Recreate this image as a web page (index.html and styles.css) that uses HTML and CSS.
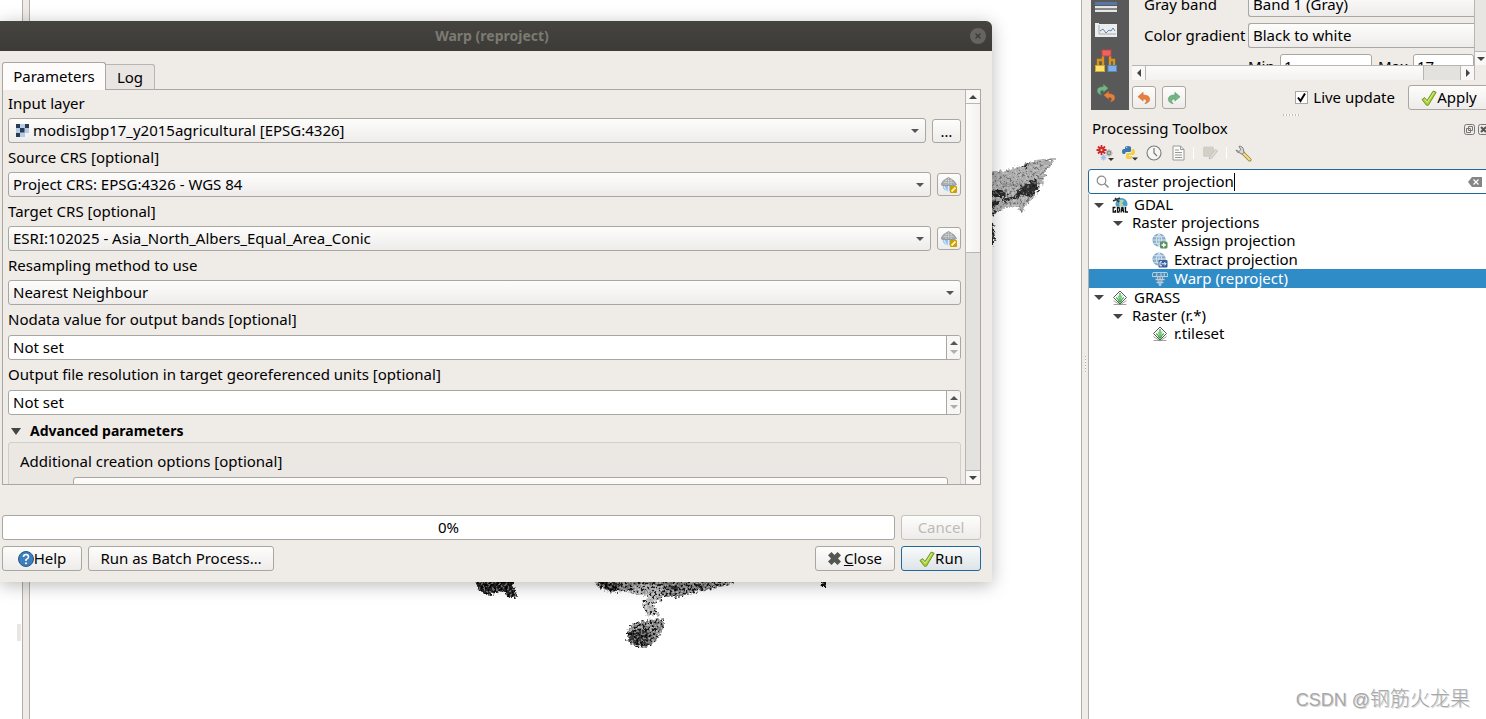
FILE: index.html
```html
<!DOCTYPE html>
<html lang="en">
<head>
<meta charset="utf-8">
<title>Warp (reproject)</title>
<link rel="stylesheet" href="styles.css">
</head>
<body>
<svg class="defs" aria-hidden="true">
  <defs>
    <filter id="grain" x="0" y="0" width="1" height="1" color-interpolation-filters="sRGB">
      <feTurbulence type="fractalNoise" baseFrequency="0.45" numOctaves="2" seed="4" result="n"/>
      <feColorMatrix in="n" values="3 0 0 0 -1  3 0 0 0 -1  3 0 0 0 -1  0 0 0 0 1"/>
      <feComponentTransfer result="g">
        <feFuncR type="discrete" tableValues="0.1 0.4 0.5 0.52 0.68"/>
        <feFuncG type="discrete" tableValues="0.1 0.4 0.5 0.52 0.68"/>
        <feFuncB type="discrete" tableValues="0.1 0.4 0.5 0.52 0.68"/>
      </feComponentTransfer>
      <feBlend in="g" in2="SourceGraphic" mode="hard-light" result="b"/>
      <feComposite in="b" in2="SourceGraphic" operator="in"/>
    </filter>
    <filter id="fine-grain" x="0" y="0" width="1" height="1" color-interpolation-filters="sRGB">
      <feTurbulence type="fractalNoise" baseFrequency="0.4" numOctaves="2" seed="7" result="n"/>
      <feColorMatrix in="n" values="3 0 0 0 -1  3 0 0 0 -1  3 0 0 0 -1  0 0 0 0 1"/>
      <feComponentTransfer result="g">
        <feFuncR type="discrete" tableValues="0.35 0.5 0.5 0.5 0.5 0.62"/>
        <feFuncG type="discrete" tableValues="0.35 0.5 0.5 0.5 0.5 0.62"/>
        <feFuncB type="discrete" tableValues="0.35 0.5 0.5 0.5 0.5 0.62"/>
      </feComponentTransfer>
      <feBlend in="g" in2="SourceGraphic" mode="hard-light" result="b"/>
      <feComposite in="b" in2="SourceGraphic" operator="in"/>
    </filter>
    <filter id="rough" x="-0.1" y="-0.1" width="1.2" height="1.2" color-interpolation-filters="sRGB">
      <feTurbulence type="fractalNoise" baseFrequency="0.4" numOctaves="2" seed="9" result="n"/>
      <feDisplacementMap in="SourceGraphic" in2="n" scale="7" xChannelSelector="R" yChannelSelector="G"/>
    </filter>
    <symbol id="check" viewBox="0 0 16 16"><path d="M1 9.5 3.6 7.6 6 10.6 12.2 1 15.2 2.2 7.4 15.2 5.4 15.2z" fill="#a9cf38" stroke="#6d8f1c" stroke-width=".9" stroke-linejoin="round"/><path d="M3.4 9 6.3 12.4 13 2.2" fill="none" stroke="#dcef8c" stroke-width="1"/></symbol>
    <symbol id="crs" viewBox="0 0 16 16"><circle cx="7.500" cy="8.500" r="6" fill="#9cc6ee"/><path d="M3 9q1 4 4 5.500M7.500 9v6" stroke="#dcebf8" fill="none"/><path d="M0 7.500Q2 3 5 2L7.500.5 10 2q3 1 5.500 5.500-2 2-4 .7-2 1.500-4 0-2 1.500-4 0-2 1-3.500-.7z" fill="#a9abad" stroke="#85888a" stroke-width=".7"/><path d="M2.500 5.500h10M4.500 3.500h6M4.800 2.500v5.500M7.500 1v7M10.200 2.500v5.500" stroke="#dcdcdc" stroke-width=".7" stroke-dasharray="1.500 .7"/><rect x="9" y="9" width="7" height="7" rx="1" fill="#c8a000"/><path d="M10.500 14.500 14.500 10.500" stroke="#fff3b0" stroke-width="1.800"/></symbol>
    <symbol id="globe" viewBox="0 0 16 16"><circle cx="7.500" cy="7.500" r="7" fill="#86acca"/><path d="M.8 7.500h13.400M2 4h11M2 11h11M7.500.5v14M7.500.8q-6 6.700 0 13.400M7.500.8q6 6.700 0 13.400" stroke="#e1edf6" stroke-width=".9" fill="none"/></symbol>
    <symbol id="grass" viewBox="0 0 16 16"><path d="M8 1 14.500 7.500 8 14 1.500 7.500z" fill="#fff" stroke="#555"/><path d="M1.500 10.500 8 15l6.500-4.500M1.500 14.500h13" stroke="#888" stroke-width=".8" fill="none"/><path d="M8 12.500V3M7.500 12.500Q6.500 9 4.200 7.500M8.500 12.500Q9.500 9 11.800 7.500" stroke="#2fa53a" stroke-width="1.200" fill="none"/><path d="M7.700 11Q7 8 6 5.500M8.300 11Q9 8 10.200 5" stroke="#6cc273" stroke-width=".9" fill="none"/></symbol>
    <symbol id="undo" viewBox="0 0 16 16"><path d="M1 6.500 7 1.500V4.500Q14.500 4.500 14.500 9.500 14.500 13.500 9 14.500 11.500 12 10.500 10.300 9.700 9 7 9V11.500z" fill="#e8803c" stroke="#c9682b" stroke-width=".6"/></symbol>
    <symbol id="redo" viewBox="0 0 16 16"><path d="M15 6.500 9 1.500V4.500Q1.500 4.500 1.500 9.500 1.500 13.500 7 14.500 4.500 12 5.500 10.300 6.300 9 9 9V11.500z" fill="#74b583" stroke="#4e9560" stroke-width=".6"/></symbol>
  </defs>
</svg>

<div class="desktop">
  <aside class="left-dock"><span class="dock-mark"></span></aside>
  <div class="splitter"></div>

  <main class="canvas">
    <svg class="map" width="1051" height="719" aria-label="Raster map">
      <g filter="url(#fine-grain)">
        <g filter="url(#rough)">
          <path d="M930 169 962 170 974 171 990 166 1006 160 1018 159 1024 161 1016 171 1013 182 1005 196 995 207 992 214 986 206 974 209 962 214 930 224z" fill="#acacac"/>
          <path d="M1005 179 1009 189 1002 197 994 195 978 201 970 203 972 199 984 196 992 186z" fill="#303030"/>
          <path d="M955 190 968 190 978 193 974 197 955 197zM955 208 966 207 970 200 960 201 955 203zM955 213 968 211 962 216 955 216zM955 220 963 222 965 238 962 248 955 240z" fill="#2c2c2c"/>
          <path d="M989 167 999 163 997 167z" fill="#333"/>
          <path d="M972 184 992 182 990 186 974 187z" fill="#929292"/>
        </g>
      </g>
      <g filter="url(#grain)">
        <g filter="url(#rough)">
          <path d="M442 570H484V586L487 598 479 598 474 591 458 595 448 590z" fill="#262626"/>
          <path d="M564 570H706L702 584 686 588 666 592 650 597 630 597 616 594 598 592 578 590 565 586z" fill="#888"/>
          <path d="M568 582 590 582 588 592 576 591zM638 586H650L646 592zM664 584H674L668 590z" fill="#303030"/>
          <path d="M604 585H632V600L622 603 630 615 617 616 612 604 620 596 604 594z" fill="#b8b8b8"/>
          <path d="M604 624 616 620 634 619 634 628 628 638 618 648 606 647 597 641 597 630z" fill="#858585"/>
          <path d="M598 632 608 629 622 634 616 645 606 645 598 639z" fill="#383838"/>
          <path d="M790 575H796V588H792z" fill="#111"/>
        </g>
      </g>
      <path d="M1016 161 1020 159 1026 159" stroke="#777" fill="none"/>
    </svg>
  </main>

  <div class="splitter grip"></div>

  <aside class="right-dock">
    <section class="styling">
      <nav class="style-tabs">
        <svg width="22" height="16" viewBox="0 0 22 16"><path d="M0 5h22v3H0z" fill="#5577a8"/><path d="M0 9h22v2H0zM0 13h22v2H0z" fill="#e6e6e6"/><path d="M0 11h22v2H0z" fill="#888"/></svg>
        <svg width="22" height="16" viewBox="0 0 22 16"><path d="M0 0h4v14H0zM3 1h19v13H3z" fill="#eceeee"/><path d="M4 2v9h17" stroke="#a8abae" fill="none"/><path d="M5 8 8 6 11 10 14 7 16 8 18 5 20 8" stroke="#6488ad" fill="none"/></svg>
        <svg width="22" height="24" viewBox="0 0 22 24"><path d="M3 18V11h5V7M19 18V11h-4V7M8 11v6M15 11v6" fill="none" stroke="#d89220" stroke-width="2.400"/><rect x="7" y="1" width="9" height="6" fill="#e96464" stroke="#c94343"/><rect x=".5" y="16.500" width="9" height="6" fill="#ffe26b" stroke="#d3a72b"/><rect x="13" y="16.500" width="8.500" height="6" fill="#7fb0e6" stroke="#5687bd"/></svg>
        <svg width="22" height="22" viewBox="0 0 22 22"><use href="#redo" x="1" y="0" width="13" height="13"/><use href="#undo" x="8" y="7" width="13" height="13"/></svg>
      </nav>
      <div class="style-main">
        <div class="style-view">
          <div class="style-form">
            <label for="band">Gray band</label>
            <span class="combo flush"><select id="band"><option>Band 1 (Gray)</option></select></span>
            <label for="grad">Color gradient</label>
            <span class="combo flush"><select id="grad"><option>Black to white</option></select></span>
            <div class="minmax">
              <label for="min">Min</label><input id="min" type="text" value="1">
              <label for="max">Max</label><input id="max" type="text" value="17">
            </div>
          </div>
          <div class="vbar small"><i></i><button type="button" class="down" aria-label="Scroll down"></button></div>
        </div>
        <div class="hbar"><button type="button" class="left" aria-label="Scroll left"></button><i class="thumb"></i><i class="track"></i><button type="button" class="right" aria-label="Scroll right"></button></div>
        <div class="style-actions">
          <button type="button" class="btn tool" aria-label="Undo"><svg width="14" height="14"><use href="#undo"/></svg></button>
          <button type="button" class="btn tool" aria-label="Redo"><svg width="14" height="14"><use href="#redo"/></svg></button>
          <label class="live"><input type="checkbox" checked><span>Live update</span></label>
          <button type="button" class="btn apply"><svg width="16" height="16"><use href="#check"/></svg><span>Apply</span></button>
        </div>
      </div>
    </section>
    <div class="dots"></div>

    <section class="toolbox">
      <header class="toolbox-head">
        <h2>Processing Toolbox</h2>
        <button type="button" class="mini" aria-label="Float"><svg width="11" height="11" viewBox="0 0 11 11"><rect x=".5" y=".5" width="10" height="10" rx="2" fill="none" stroke="#777"/><path d="M4.500 2.500h4v4h-4zM2.500 4.500h4v4h-4z" fill="#efebe7" stroke="#777"/></svg></button>
        <button type="button" class="mini" aria-label="Close panel"><svg width="11" height="11" viewBox="0 0 11 11"><rect x=".5" y=".5" width="10" height="10" rx="2" fill="none" stroke="#777"/><path d="M3 3l5 5M8 3l-5 5" stroke="#555" stroke-width="2"/></svg></button>
      </header>
      <div class="toolbar">
        <button type="button" aria-label="Models"><svg width="18" height="16" viewBox="0 0 18 16"><circle cx="5.500" cy="5" r="3" fill="#cf2a2a"/><path d="M5.500 0v10M.5 5h10M2 1.500l7 7M9 1.500l-7 7" stroke="#cf2a2a" stroke-width="1.800"/><circle cx="5.500" cy="5" r="1" fill="#f5dede"/><circle cx="13" cy="8" r="2" fill="#8c8c8c"/><path d="M13 4.500v7M9.500 8h7M10.600 5.600l4.800 4.800M15.400 5.600l-4.800 4.800" stroke="#8c8c8c" stroke-width="1.200"/><circle cx="13" cy="8" r=".8" fill="#eee"/><circle cx="7.500" cy="12.500" r="2" fill="#a5bfea"/><path d="M7.500 9.500v6M4.500 12.500h6M5.400 10.400l4.200 4.200M9.600 10.400l-4.200 4.200" stroke="#a5bfea" stroke-width="1.100"/><path d="M12 13h6l-3 3z" fill="#333"/></svg></button>
        <button type="button" aria-label="Scripts"><svg width="18" height="16" viewBox="0 0 18 16"><path d="M4 4V2.500Q4 1 7 1T10 2.500V5.500Q10 7 8.500 7H5.500Q4 7 4 9H2.500Q1 9 1 6.500T2.500 4H7z" fill="#3b78ae"/><path d="M10.500 4H12Q14 4 14 7T12 10H8V11H11V12.500Q11 14 8 14T5 12.500V9.500Q5 8 6.500 8H9.500Q10.500 8 10.500 6.500z" fill="#f6cf46"/><circle cx="5.700" cy="2.500" r=".6" fill="#fff"/><path d="M11 12.500h6l-3 3z" fill="#333"/></svg></button>
        <button type="button" aria-label="History"><svg width="16" height="16" viewBox="0 0 16 16"><circle cx="8" cy="8" r="7" fill="#f6f6f4" stroke="#7b7b7b" stroke-width="1.100"/><path d="M8 3v5l3 3" fill="none" stroke="#777" stroke-width="1.200"/></svg></button>
        <button type="button" aria-label="Results"><svg width="16" height="16" viewBox="-3 0 16 16"><path d="M1 1h7.500l3.500 3.500V15H1z" fill="#fafaf8" stroke="#9a9a9a"/><path d="M8.500 1v3.500H12M3 5h4M3 7.500h7M3 10h7M3 12.500h7" fill="none" stroke="#999"/></svg></button>
        <i class="sep"></i>
        <button type="button" aria-label="Edit in place" disabled><svg width="16" height="16" viewBox="0 0 16 16"><path d="M1 3 2 1.500h9l1 1.500v7l-3 2H2l-1-1z" fill="#d2cfc7"/><path d="M7 14 8 11 13.500 4.500l2 1.500L10 13z" fill="#dedbd2" stroke="#bebab1" stroke-width=".8"/></svg></button>
        <i class="sep"></i>
        <button type="button" aria-label="Options"><svg width="17" height="17" viewBox="0 0 17 17"><path d="M7.500 7.500 14.700 14.700" stroke="#8f7a35" stroke-width="3.600" stroke-linecap="round"/><path d="M8.500 8.500 14.700 14.600" stroke="#efdc84" stroke-width="2.200" stroke-linecap="round"/><path d="M4 1.200Q8 1 8.500 5L9 7.500 7 9.200 5 8Q2 8 1 5L4 6.500 5.800 4.800z" fill="#d9dad8" stroke="#777" stroke-width=".9"/></svg></button>
      </div>
      <div class="search">
        <svg width="14" height="14" viewBox="0 0 14 14"><circle cx="5.500" cy="5.500" r="4.300" fill="none" stroke="#8c8c8c" stroke-width="1.200"/><path d="M8.700 8.700 12.500 12.500" stroke="#8c8c8c" stroke-width="1.600"/></svg>
        <label class="field"><span class="search-size">raster projection</span><input type="text" value="raster projection" aria-label="Search"></label>
        <button type="button" class="clear" aria-label="Clear"><svg width="14" height="10" viewBox="0 0 14 10"><path d="M4 0h10v10H4L0 5z" fill="#858585"/><path d="M5.500 2.500l5 5M10.500 2.500l-5 5" stroke="#fff" stroke-width="1.200"/></svg></button>
      </div>
      <ul class="tree">
        <li class="lvl1"><i class="arrow"></i><svg width="16" height="16" viewBox="0 0 16 16"><circle cx="9.500" cy="7" r="6" fill="#4c9fc9"/><path d="M8 3q3-1 4 1l-2 2 2 3-2 2-3-3z" fill="#b5d4a2"/><path d="M1 4 8 1M3 1l4 4" stroke="#333" stroke-width="1.500"/><path d="M0 9h16v7H0z" fill="#fff" fill-opacity=".6"/><path d="M3.500 10.500H1.200v4.500h2.200v-2M5.500 10.500V15H7q1.200-2 0-4.500zM9 15.500l1-5h.8l1 5M9.500 13.500h2M13.500 10v5H16" stroke="#111" stroke-width="1.300" fill="none"/></svg><span>GDAL</span></li>
        <li class="lvl2"><i class="arrow"></i><span>Raster projections</span></li>
        <li class="lvl3"><svg width="16" height="16" viewBox="0 0 16 16"><use href="#globe" width="15" height="15"/><rect x="8" y="8.500" width="7.500" height="7" rx="1.500" fill="#5a8f60"/><path d="M11.700 9.800v4.500M9.500 12H14" stroke="#fff" stroke-width="1.400"/></svg><span>Assign projection</span></li>
        <li class="lvl3 tall"><svg width="16" height="16" viewBox="0 0 16 16"><use href="#globe" width="15" height="15"/><rect x="6.500" y="8" width="9" height="7.500" rx="1" fill="#3a5e9c"/><path d="M10 9.800H8v4h2M9.500 11.800H14M12.300 10l1.700 1.800-1.700 1.700" stroke="#fff" fill="none"/></svg><span>Extract projection</span></li>
        <li class="lvl3 tall selected"><svg width="16" height="16" viewBox="0 0 16 16"><path d="M3 3h10q1 8-5 12-6-4-5-12z" fill="#5d8fb4"/><path d="M1 1.500h14M0 5.500h16M1 1.500 0 5.500M5 1.500 4.500 5.500M9 1.500v4M12 1.500l.5 4M15 1.500l1 4M3.500 8.500h9M4.500 11.500h7M5.500 6Q6 12 8 15M10.500 6Q10 12 8 15M8 6v9" stroke="#b7cfdf" fill="none"/></svg><span>Warp (reproject)</span></li>
        <li class="lvl1 tall"><i class="arrow"></i><svg width="16" height="16"><use href="#grass"/></svg><span>GRASS</span></li>
        <li class="lvl2"><i class="arrow"></i><span>Raster (r.*)</span></li>
        <li class="lvl3"><svg width="16" height="16"><use href="#grass"/></svg><span>r.tileset</span></li>
      </ul>
    </section>
  </aside>

  <section class="dialog" role="dialog" aria-labelledby="dlg-title">
    <header class="titlebar">
      <h1 id="dlg-title">Warp (reproject)</h1>
      <button type="button" class="win-close" aria-label="Close window"><svg width="16" height="16" viewBox="0 0 16 16"><circle cx="8" cy="8" r="8" fill="#656460"/><path d="M5.500 5.500l5 5M10.500 5.500l-5 5" stroke="#3a3935" stroke-width="1.200"/></svg></button>
    </header>
    <div class="dialog-body">
      <div class="tabs"><button type="button" class="tab active">Parameters</button><button type="button" class="tab">Log</button></div>
      <div class="pane">
        <form class="params">
          <label for="layer">Input layer</label>
          <div class="row">
            <span class="combo with-icon"><svg width="13" height="13" viewBox="0 0 13 13"><path d="M0 0h13v13H0z" fill="#b5cbe6"/><path d="M0 0h4v4H0zM9 0h4v4H9zM4 4h4.500v4.500H4zM0 9h4v4H0z" fill="#2c3c50"/><path d="M9 9h4v4H9z" fill="#eef3f8"/></svg><select id="layer"><option>modisIgbp17_y2015agricultural [EPSG:4326]</option></select></span>
            <button type="button" class="btn browse">…</button>
          </div>
          <label for="src">Source CRS [optional]</label>
          <div class="row">
            <span class="combo"><select id="src"><option>Project CRS: EPSG:4326 - WGS 84</option></select></span>
            <button type="button" class="btn tool" aria-label="Select source CRS"><svg width="16" height="16"><use href="#crs"/></svg></button>
          </div>
          <label for="dst">Target CRS [optional]</label>
          <div class="row">
            <span class="combo"><select id="dst"><option>ESRI:102025 - Asia_North_Albers_Equal_Area_Conic</option></select></span>
            <button type="button" class="btn tool" aria-label="Select target CRS"><svg width="16" height="16"><use href="#crs"/></svg></button>
          </div>
          <label for="resample">Resampling method to use</label>
          <div class="row"><span class="combo"><select id="resample"><option>Nearest Neighbour</option></select></span></div>
          <label for="nodata">Nodata value for output bands [optional]</label>
          <div class="row spin-row"><span class="spin"><input id="nodata" type="text" value="Not set"><span class="steps"><i class="up"></i><i class="dn"></i></span></span></div>
          <label for="res">Output file resolution in target georeferenced units [optional]</label>
          <div class="row spin-row"><span class="spin"><input id="res" type="text" value="Not set"><span class="steps"><i class="up"></i><i class="dn"></i></span></span></div>
          <h3 class="advanced"><i class="arrow"></i>Advanced parameters</h3>
          <div class="group">
            <p>Additional creation options [optional]</p>
            <div class="profile"><label for="profile">Profile</label><span class="combo"><select id="profile"><option>Default</option></select></span></div>
          </div>
        </form>
        <div class="vbar"><button type="button" class="up" aria-label="Scroll up"></button><i class="thumb"></i><i class="track"></i><button type="button" class="down" aria-label="Scroll down"></button></div>
      </div>
      <div class="footer">
        <div class="progress" role="progressbar" aria-valuenow="0">0%</div>
        <button type="button" class="btn wide" disabled><span>Cancel</span></button>
      </div>
      <div class="footer last">
        <button type="button" class="btn wide"><svg width="16" height="16" viewBox="0 0 16 16"><circle cx="8" cy="8" r="7.500" fill="#3d7fbc" stroke="#22588a"/><path d="M5.500 6Q5.500 3.500 8 3.500T10.500 6Q10.500 7.300 8 8.600V10" fill="none" stroke="#fff" stroke-width="1.500"/><circle cx="8" cy="12.300" r="1" fill="#fff"/></svg><span>Help</span></button>
        <button type="button" class="btn batch"><span>Run as Batch Process…</span></button>
        <span class="grow"></span>
        <button type="button" class="btn wide closer"><svg width="13" height="13" viewBox="0 0 13 13"><path d="M3.500 0 6.500 3 9.500 0 13 3.300 10 6.500 13 9.500 9.500 13 6.500 10 3.500 13 0 9.500 3 6.500 0 3.300z" fill="#555753"/></svg><span><u>C</u>lose</span></button>
        <button type="button" class="btn wide primary"><svg width="16" height="16"><use href="#check"/></svg><span>Run</span></button>
      </div>
    </div>
  </section>
  <div class="watermark"><span>CSDN @</span>钢筋火龙果</div>
</div>
</body>
</html>
```
FILE: styles.css
```css
* { box-sizing: border-box; }
html, body { height: 100%; }
body {
  margin: 0;
  overflow: hidden;
  color: #000;
  font: 15px/16px "Noto Sans", "Open Sans", sans-serif;
}
button, input, select { font: inherit; color: inherit; margin: 0; }
input, select { line-height: 20px; }
button { padding: 0; border: 0; background: none; }
svg { display: block; flex: none; }
label, h1, h2, h3, p { margin: 0; white-space: nowrap; }
label, h2, p, .btn span, .tree span { padding-bottom: 2px; }
.defs { position: absolute; width: 0; height: 0; }

.desktop { position: relative; display: flex; height: 100vh; overflow: hidden; background: #fff; }
.left-dock { flex: 0 0 22px; display: flex; justify-content: flex-end; align-items: flex-end; padding: 0 1px 78px 0; }
.dock-mark { width: 4px; height: 17px; background: #e8e7e5; }
.splitter { flex: 0 0 8px; border: solid #b3afac; border-width: 0 1px; background: #efebe7; }
.splitter.grip { flex-basis: 7px; border-right: 0; display: flex; align-items: center; justify-content: flex-end; padding-top: 10px; }
.grip::after { content: ""; width: 1px; height: 18px; margin-right: 2px; background: repeating-linear-gradient(#b0aca8 0 1px, #faf9f7 1px 3px); }
.canvas { flex: 1; min-width: 0; overflow: hidden; }
.right-dock { flex: 0 0 398px; display: flex; flex-direction: column; overflow: hidden; background: #efebe7; }

/* shared controls */
.btn {
  display: flex; align-items: center; justify-content: center;
  height: 25px; border: 1px solid #aaa6a2; border-radius: 3px;
  background: linear-gradient(#fdfdfc, #eeecea); white-space: nowrap;
}
.btn:disabled { color: #bebab7; border-color: #c4c0bc; }
.btn.tool { flex: none; width: 24px; height: 23px; }
.btn.wide { flex: none; width: 80px; }
.btn.primary { border-color: #21699c; background: linear-gradient(#f9fafa, #dde4e8); }
.combo { position: relative; flex: 1; min-width: 0; display: flex; }
.combo select {
  appearance: none; width: 100%; height: 25px; padding: 0 24px 2px 4px;
  border: 1px solid #aaa6a2; border-radius: 3px; background: linear-gradient(#fdfdfc, #eeecea);
}
.combo::after {
  content: ""; position: absolute; right: 7px; top: 11px;
  border: solid transparent; border-width: 4px 4px 0; border-top-color: #555;
}
.with-icon svg { position: absolute; left: 8px; top: 6px; }
.with-icon select { padding-left: 24px; }
.combo.flush select { border-right: 0; border-radius: 3px 0 0 3px; }
.combo.flush::after { display: none; }
.arrow { flex: none; border: solid transparent; border-width: 5px 5px 0; border-top-color: #444; }

/* scroll bars */
.vbar { flex: 0 0 15px; display: flex; flex-direction: column; border-left: 1px solid #b9b5b2; }
.vbar button, .hbar button { flex: none; display: flex; align-items: center; justify-content: center; background: #f9f8f7; }
.vbar button { height: 14px; }
.vbar button::after, .hbar button::after { content: ""; border: 4px solid transparent; }
.vbar .up { border-bottom: 1px solid #b9b5b2; }
.vbar .up::after { border-top-width: 0; border-bottom-color: #444; }
.vbar .down { border-top: 1px solid #b9b5b2; }
.vbar .down::after { border-bottom-width: 0; border-top-color: #444; }
.vbar .thumb { flex: 148; border-bottom: 1px solid #b9b5b2; background: linear-gradient(90deg, #fbfbfa, #f3f2f0); }
.vbar .track { flex: 218; background: #e3e2df; }
.vbar.small { flex-basis: 12px; margin-left: auto; }
.vbar.small i { flex: 1; background: #e8e6e3; }
.hbar { display: flex; height: 15px; margin-right: 11px; border: 1px solid #b9b5b2; border-width: 1px 1px 0 0; }
.hbar button { width: 14px; }
.hbar .left { border-right: 1px solid #b9b5b2; }
.hbar .right { border-left: 1px solid #b9b5b2; }
.hbar .left::after { border-left-width: 0; border-right-color: #444; }
.hbar .right::after { border-right-width: 0; border-left-color: #444; }
.hbar .thumb { flex: 279; border-right: 1px solid #b9b5b2; background: linear-gradient(#fbfbfa, #f3f2f0); }
.hbar .track { flex: 36; background: #e3e2df; }

/* layer styling panel */
.styling { flex: none; display: flex; height: 110px; padding-left: 3px; }
.style-tabs { flex: 0 0 38px; display: flex; flex-direction: column; align-items: center; justify-content: flex-end; gap: 10px; padding: 0 8px 5px 0; overflow: hidden; background: #595959; }
.style-main { flex: 1; min-width: 0; padding-left: 3px; display: flex; flex-direction: column; }
.style-view { height: 65px; display: flex; overflow: hidden; }
.style-form { flex: 1; min-width: 0; margin-top: -8px; padding-left: 12px; display: grid; grid-template-columns: 98px 1fr; gap: 6px; align-content: start; align-items: center; }
.minmax { grid-column: 1 / -1; display: grid; grid-template-columns: 26px 92px 29px 1fr; column-gap: 6px; align-items: center; padding-left: 104px; }
.minmax input { width: 100%; height: 25px; padding: 0 3px 2px; border: 1px solid #aaa6a2; border-radius: 3px; }
.style-actions { flex: 1; display: flex; align-items: center; gap: 6px; padding-top: 5px; }
.live { display: flex; align-items: center; gap: 5px; margin-left: auto; margin-right: 7px; padding: 0; }
.live span { padding-bottom: 2px; }
.live input {
  appearance: none; width: 13px; height: 13px; border: 1px solid #aaa6a2;
  background: #fff url("data:image/svg+xml,%3Csvg xmlns='http://www.w3.org/2000/svg' viewBox='0 0 11 11'%3E%3Cpath d='M2 5.500 4.500 9 9 1.500' fill='none' stroke='%23000' stroke-width='2'/%3E%3C/svg%3E");
}
.apply { flex: none; width: 82px; margin-right: -4px; }
.dots { flex: none; width: 17px; height: 2px; margin: 4px auto 3px 195px; background: repeating-linear-gradient(90deg, #bdb9b5 0 1px, #faf9f7 1px 3px); }

/* processing toolbox */
.toolbox { flex: 1; min-height: 0; display: flex; flex-direction: column; }
.toolbox-head { display: flex; align-items: center; gap: 3px; height: 20px; padding-left: 4px; margin-right: -3px; }
.toolbox-head h2 { flex: 1; font-size: 15px; font-weight: 400; }
.toolbar { display: flex; align-items: center; gap: 7px; height: 30px; padding: 0 8px 2px; }
.toolbar .sep { width: 1px; height: 12px; margin: 0 1px; background: #fff; }
.search { display: flex; align-items: center; height: 25px; padding: 0 4px 0 7px; margin-right: -1px; border: 1px solid #21699c; border-radius: 3px 0 0 3px; background: #fff; }
.field { position: relative; display: block; margin-left: 7px; border-right: 1px solid #000; }
.search-size { visibility: hidden; }
.field input { position: absolute; inset: -2px 0; width: 100%; padding: 0 0 2px; border: 0; outline: 0; background: none; }
.clear { margin-left: auto; }
.tree { flex: 1; margin: 0; padding: 2px 0 0; list-style: none; border-left: 1px solid #b3afac; background: #fff; }
.tree li { display: flex; align-items: center; height: 18px; white-space: nowrap; }
.tree li.tall { height: 19px; }
.lvl1 { padding-left: 5px; }
.lvl1 svg { margin: 0 6px 0 8px; }
.lvl2 { padding-left: 24px; gap: 9px; }
.lvl3 { padding-left: 63px; gap: 6px; }
.selected { color: #fff; background: #308cc6; }

/* dialog window */
.dialog {
  position: absolute; left: 0; right: 494px; top: 21px; bottom: 137px;
  display: flex; flex-direction: column; background: #efebe7;
  border-radius: 0 6px 0 0; box-shadow: 0 3px 18px rgba(0, 0, 0, .28);
}
.titlebar { flex: 0 0 30px; display: flex; align-items: center; padding: 0 6px 0 14px; border-radius: 0 6px 0 0; background: linear-gradient(#45443f, #3c3b37); }
.titlebar h1 { flex: 1; text-align: center; font-size: 14px; font-weight: 700; color: #7d7a73; }
.dialog-body { flex: 1; min-height: 0; display: flex; flex-direction: column; padding: 11px 11px 11px 2px; }
.tabs { flex: none; display: flex; align-items: flex-end; height: 28px; margin-bottom: -1px; z-index: 1; }
.tab { width: 49px; height: 26px; border: 1px solid #b9b5b2; border-left: 0; border-bottom-color: #aaa6a2; border-radius: 0 3px 0 0; background: #e9e5e2; }
.tab.active { width: 104px; height: 28px; padding-bottom: 1px; border: 1px solid #aaa6a2; border-bottom: 0; border-radius: 3px 3px 0 0; background: #fdfcfb; }
.pane { flex: 1; min-height: 0; display: flex; overflow: hidden; border: 1px solid #aaa6a2; }
.params { flex: 1; min-width: 0; height: 100%; overflow: hidden; padding: 5px 4px 0 5px; }
.params > label { display: block; margin-bottom: 5px; }
.row { display: flex; align-items: center; gap: 6px; margin-bottom: 6px; }
.spin-row { padding-top: 1px; }
.browse { width: 29px; height: 24px; }
.spin { flex: 1; display: flex; height: 25px; border: 1px solid #aaa6a2; border-radius: 3px; background: #fff; overflow: hidden; }
.spin input { flex: 1; min-width: 0; padding: 0 4px 2px; border: 0; outline: 0; background: none; }
.steps { flex: 0 0 14px; display: flex; flex-direction: column; align-items: center; justify-content: space-evenly; border-left: 1px solid #aaa6a2; background: #f7f6f4; }
.steps i { border: 4px solid transparent; }
.steps .up { border-top-width: 0; border-bottom-color: #555; }
.steps .dn { border-bottom-width: 0; border-top-color: #b0adaa; }
.advanced { display: flex; align-items: center; gap: 9px; height: 21px; padding: 0 0 1px 3px; font-size: 14px; font-weight: 700; }
.advanced .arrow { border-width: 7px 5px 0; }
.group { padding: 10px 12px 10px 11px; border: 1px solid #d2cecb; border-radius: 3px; background: #ebe7e3; }
.profile { display: flex; align-items: center; gap: 8px; margin-top: 6px; }
.profile label { width: 45px; }
.footer { flex: none; display: flex; gap: 6px; margin-top: 6px; }
.pane + .footer { margin-top: 30px; }
.progress { flex: 1; border: 1px solid #aaa6a2; border-radius: 3px; background: #fff; text-align: center; line-height: 23px; }
.batch { width: 186px; }
.grow { flex: 1; }
.closer { gap: 3px; }

.watermark {
  position: absolute; right: 16px; bottom: 4px;
  font: 300 20px/30px "Liberation Sans", "Noto Sans CJK SC", sans-serif; color: #a8a8a8; text-shadow: 1px 1px 0 #d8d8d8;
}
.watermark span { font-size: 18px; }
```
